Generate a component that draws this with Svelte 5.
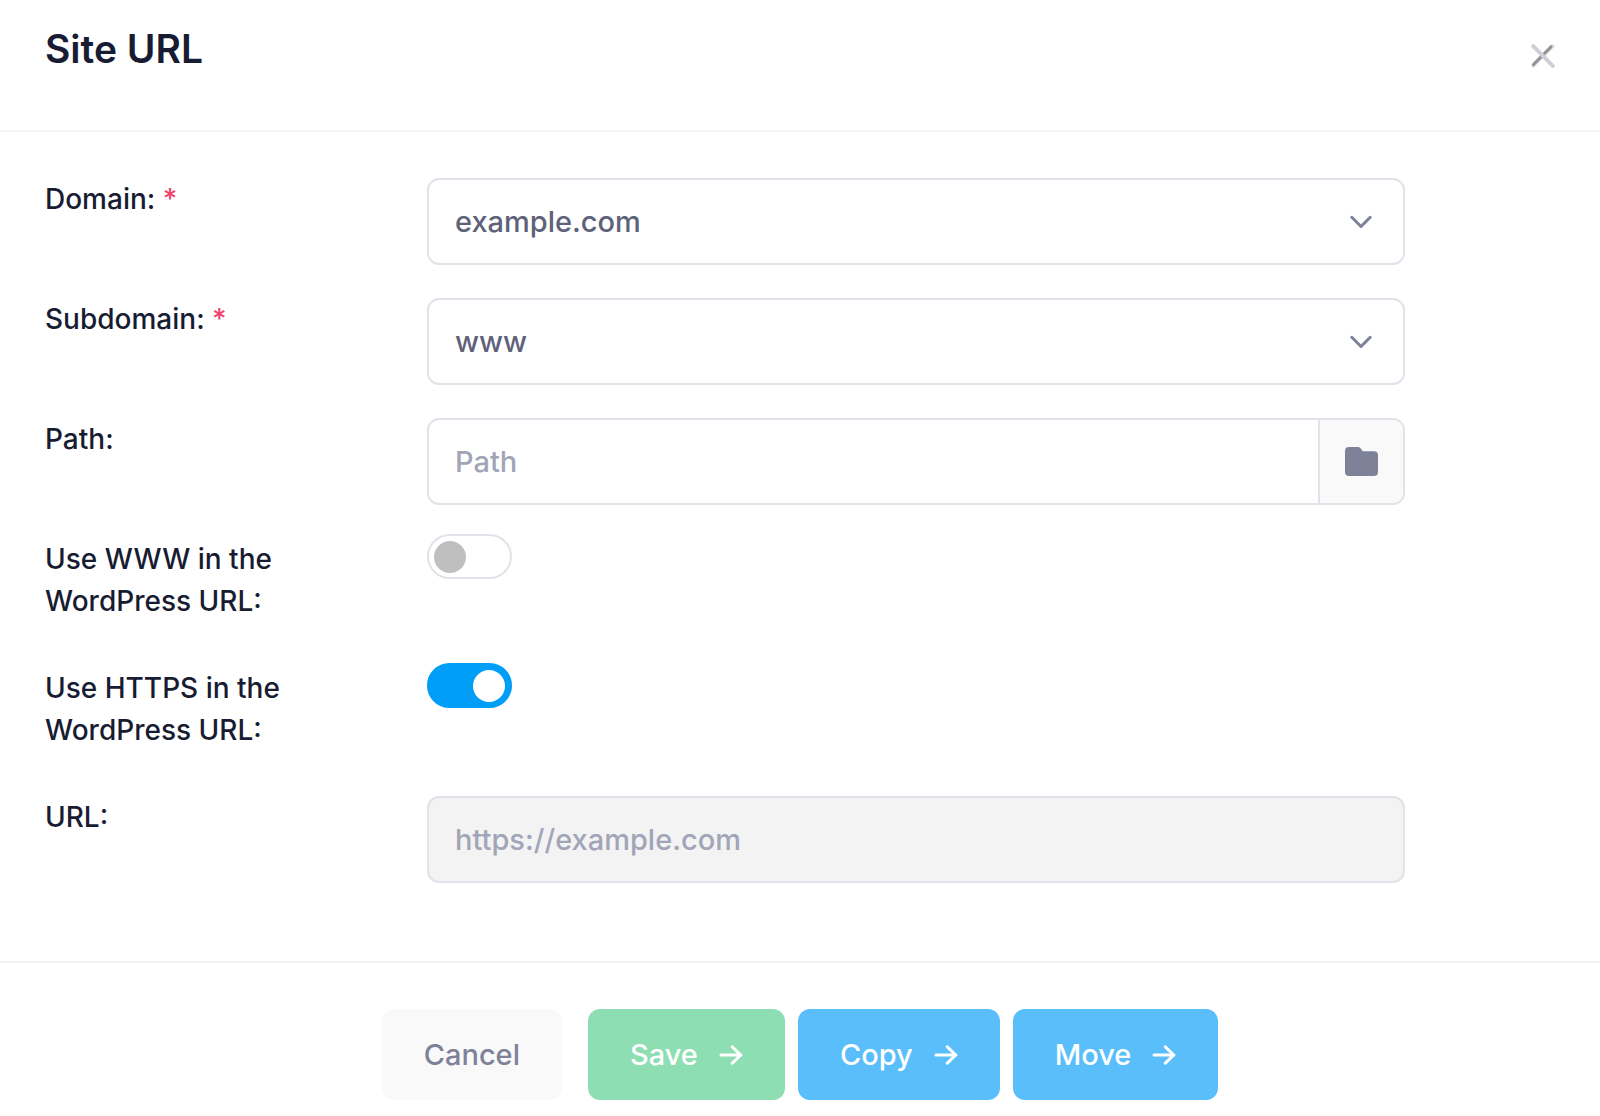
<script>
  let domain = $state('example.com');
  let subdomain = $state('www');
  let path = $state('');
  let useWww = $state(false);
  let useHttps = $state(true);

  const url = $derived(`${useHttps ? 'https' : 'http'}://${useWww ? 'www.' : ''}example.com`);

  const actions = [
    { label: 'Save', kind: 'success' },
    { label: 'Copy', kind: 'primary' },
    { label: 'Move', kind: 'primary' }
  ];
</script>

{#snippet chevron()}
  <svg class="chevron" viewBox="0 0 24 16" aria-hidden="true">
    <path d="M2.8 3.3 12 12.5l9.2-9.2" />
  </svg>
{/snippet}

<div class="modal" role="dialog" aria-labelledby="title">
  <header>
    <h1 id="title">Site URL</h1>
    <button class="close" type="button" aria-label="Close">
      <svg viewBox="0 0 24 24" aria-hidden="true">
        <path class="faint" d="M2.2 21.8 21.8 2.2" />
        <path class="dark" d="M2.4 20.6 20.2 2.6" />
        <path class="light" d="M2.2 2.2l19.6 19.6" />
      </svg>
    </button>
  </header>

  <form id="site-url" onsubmit={(e) => e.preventDefault()}>
    <div class="row">
      <label for="domain">Domain: <span class="required">*</span></label>
      <div class="field">
        <select id="domain" bind:value={domain}>
          <option>example.com</option>
        </select>
        {@render chevron()}
      </div>
    </div>

    <div class="row">
      <label for="subdomain">Subdomain: <span class="required">*</span></label>
      <div class="field">
        <select id="subdomain" bind:value={subdomain}>
          <option>www</option>
        </select>
        {@render chevron()}
      </div>
    </div>

    <div class="row">
      <label for="path">Path:</label>
      <div class="field">
        <input id="path" type="text" placeholder="Path" bind:value={path} />
        <button class="browse" type="button" aria-label="Browse folders">
          <svg viewBox="0 0 33 29" aria-hidden="true">
            <path d="M4 0H12.500c1.300 0 2.200.400 3 1.200l2.400 3.100H29a4 4 0 0 1 4 4V25a4 4 0 0 1-4 4H4a4 4 0 0 1-4-4V4a4 4 0 0 1 4-4z" />
          </svg>
        </button>
      </div>
    </div>

    <div class="row switch-row">
      <label for="use-www">Use WWW in the<br />WordPress URL:</label>
      <input id="use-www" class="switch" type="checkbox" role="switch" bind:checked={useWww} />
    </div>

    <div class="row switch-row">
      <label for="use-https">Use HTTPS in the<br />WordPress URL:</label>
      <input id="use-https" class="switch" type="checkbox" role="switch" bind:checked={useHttps} />
    </div>

    <div class="row">
      <label for="url">URL:</label>
      <div class="field disabled">
        <input id="url" type="text" value={url} disabled />
      </div>
    </div>
  </form>

  <footer>
    <button class="btn cancel" type="button">Cancel</button>
    <div class="actions">
      {#each actions as action}
        <button class="btn {action.kind}" type="button">
          {action.label}
          <svg viewBox="0 0 24 20" aria-hidden="true">
            <path d="M2 10h20M13.300 1.800l8.500 8.200-8.500 8.200" />
          </svg>
        </button>
      {/each}
    </div>
  </footer>
</div>

<style>
  :global(body) {
    margin: 0;
    background: #fff;
  }

  .modal {
    font-family: Inter, 'Liberation Sans', sans-serif;
    font-size: 28px;
    font-weight: 500;
    line-height: 42px;
    color: #181c32;
  }

  header {
    display: flex;
    justify-content: space-between;
    align-items: flex-start;
    padding: 25px 45px 57px;
    border-bottom: 2px solid #f3f3f4;
  }

  h1 {
    margin: 0;
    font-size: 39px;
    font-weight: 600;
    line-height: 48px;
  }

  button,
  input,
  select {
    font: inherit;
    color: inherit;
    margin: 0;
    border: none;
    background: none;
    cursor: pointer;
  }

  .close {
    display: flex;
    padding: 19px 0 0;
  }

  .close svg {
    width: 24px;
    height: 24px;
    fill: none;
    stroke-linecap: round;
  }

  .faint {
    stroke: #e6e7ec;
    stroke-width: 4;
  }

  .dark {
    stroke: #949496;
    stroke-width: 3;
  }

  .light {
    stroke: #cdced7;
    stroke-width: 4;
  }

  form {
    padding: 46px 45px 78px;
  }

  .row {
    display: grid;
    grid-template-columns: 382fr 978fr 150fr;
    align-items: start;
    margin-bottom: 33px;
  }

  .row:last-child {
    margin-bottom: 0;
  }

  .switch-row {
    margin-bottom: 45px;
  }

  .required {
    color: #f1416c;
  }

  .field {
    position: relative;
    display: flex;
    box-sizing: border-box;
    height: 87px;
    border: 2px solid #e1e3ea;
    border-radius: 12px;
    overflow: hidden;
    font-size: 29px;
    color: #5e6278;
  }

  .field select,
  .field input {
    flex: 1;
    min-width: 0;
    padding: 0 26px;
    outline: none;
    appearance: none;
  }

  .field input::placeholder {
    color: #a1a5b7;
    opacity: 1;
  }

  .disabled {
    background: #f3f3f3;
    color: #a1a5b7;
  }

  .chevron {
    position: absolute;
    top: 34px;
    right: 30px;
    width: 24px;
    height: 16px;
    fill: none;
    stroke: #7e8299;
    stroke-width: 3;
    stroke-linecap: round;
    stroke-linejoin: round;
    pointer-events: none;
  }

  .browse {
    display: flex;
    align-items: center;
    justify-content: center;
    width: 85px;
    padding: 0;
    border-left: 2px solid #e1e3ea;
    background: #f9f9f9;
  }

  .browse svg {
    width: 33px;
    height: 29px;
    fill: #7e8299;
  }

  .switch {
    appearance: none;
    display: flex;
    align-items: center;
    box-sizing: border-box;
    width: 85px;
    height: 45px;
    margin-top: -4px;
    padding: 0 5px;
    border: 2px solid #e1e3ea;
    border-radius: 23px;
  }

  .switch::before {
    content: '';
    width: 32px;
    height: 32px;
    border-radius: 50%;
    background: #bfbfbf;
  }

  .switch:checked {
    justify-content: flex-end;
    border-color: #009ef7;
    background: #009ef7;
  }

  .switch:checked::before {
    background: #fff;
  }

  footer {
    display: flex;
    justify-content: center;
    gap: 26px;
    padding: 46px 45px 16px;
    border-top: 2px solid #f3f3f4;
  }

  .actions {
    display: flex;
    gap: 13px;
  }

  .btn {
    display: flex;
    align-items: center;
    gap: 21px;
    height: 91px;
    padding: 0 42px;
    border-radius: 12px;
    font-size: 29px;
    color: #fff;
  }

  .btn svg {
    width: 24px;
    height: 20px;
    fill: none;
    stroke: currentColor;
    stroke-width: 3;
    stroke-linecap: round;
    stroke-linejoin: round;
  }

  .cancel {
    background: #f9f9f9;
    color: #7e8299;
  }

  .success {
    background: #8ddeb2;
  }

  .primary {
    background: #59befa;
  }
</style>
